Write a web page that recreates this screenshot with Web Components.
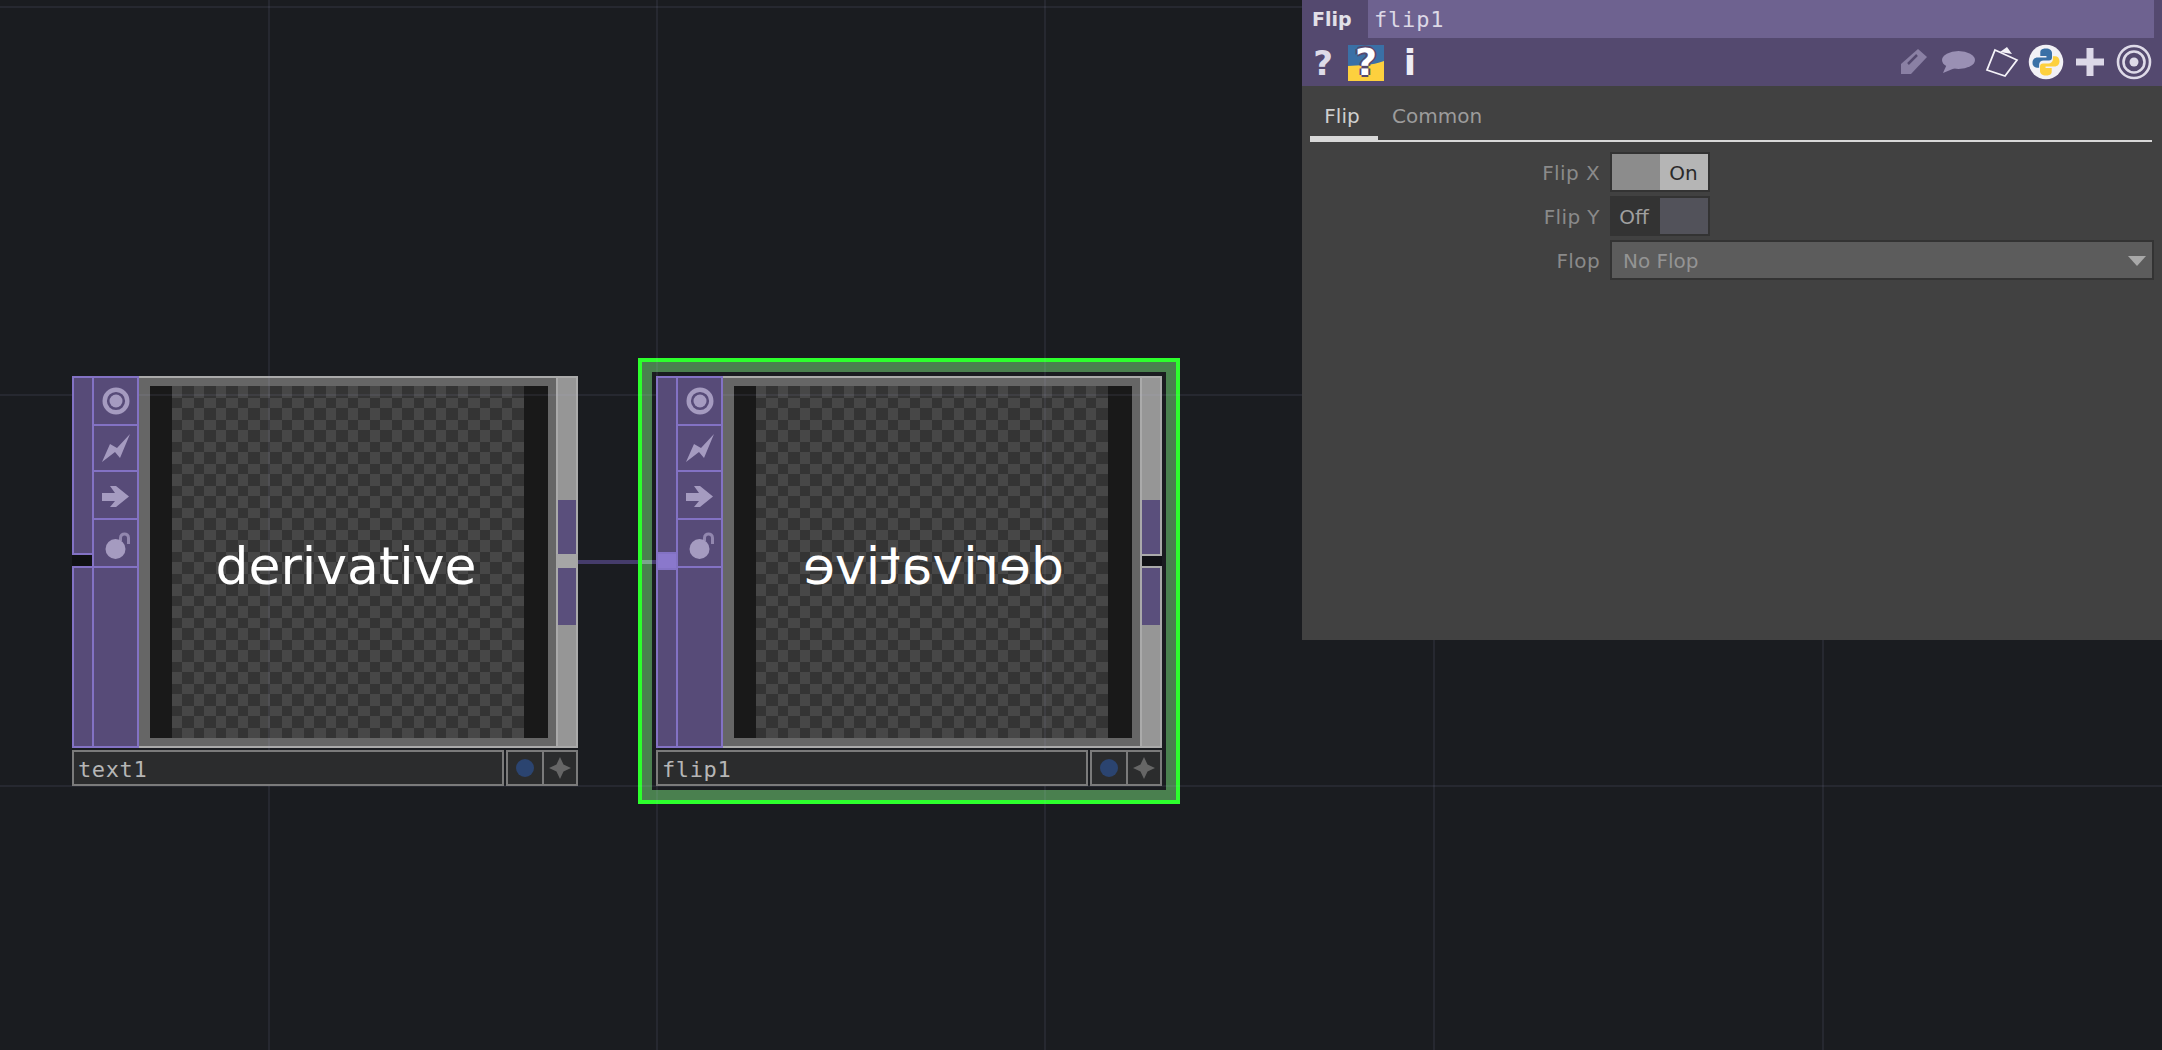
<!DOCTYPE html>
<html lang="en">
<head>
<meta charset="utf-8">
<title>Flip</title>
<style>
html,body{margin:0;padding:0;background:#1a1c20;overflow:hidden}
body{font-family:"DejaVu Sans",sans-serif}
</style>
</head>
<body>
<td-network>
  <td-op name="text1" output style="left:72px;top:376px">derivative</td-op>
  <td-wire style="left:578px;top:560px"></td-wire>
  <td-op name="flip1" input selected flip style="left:656px;top:376px">derivative</td-op>
  <td-panel optype="Flip" opname="flip1" slot="panel">
    <td-param label="Flip X"><td-toggle on></td-toggle></td-param>
    <td-param label="Flip Y"><td-toggle></td-toggle></td-param>
    <td-param label="Flop"><td-menu value="No Flop"></td-menu></td-param>
  </td-panel>
</td-network>
<script>
const ICONS = {
  viewer:`<svg width="28" height="28" viewBox="0 0 28 28"><circle cx="14" cy="14" r="11.3" fill="none" stroke="currentColor" stroke-width="4.400"/><circle cx="14" cy="14" r="6.500" fill="currentColor"/></svg>`,
  bolt:`<svg width="28" height="28" viewBox="0 0 28 28"><path fill="currentColor" d="M28 0L18 24L13 18L0 28L8 10L15 14Z"/></svg>`,
  arrow:`<svg width="27" height="21" viewBox="0 0 27 21" style="margin-top:3px"><path fill="currentColor" d="M0 7H13L8 0H14L27 10.5L14 21H8L13 15H0Z"/></svg>`,
  lock:`<svg width="30" height="30" viewBox="0 0 30 30" style="margin-top:3px"><circle cx="14.500" cy="19" r="10" fill="currentColor"/><path d="M19.500 11V8C19.500 2.500 27.500 2.500 27.500 8V14" fill="none" stroke="currentColor" stroke-opacity=".75" stroke-width="3"/></svg>`,
  dot:`<svg width="22" height="22" viewBox="0 0 22 22"><circle cx="11" cy="11" r="9" fill="#2b4470"/></svg>`,
  star:`<svg width="24" height="24" viewBox="0 0 24 24"><path fill="#666" d="M12 1L15.500 8.500L23 12L15.500 15.500L12 23L8.500 15.500L1 12L8.500 8.500Z"/></svg>`,
  pyhelp:`<svg width="36" height="36" viewBox="0 0 36 36"><rect width="36" height="36" fill="#3a70a6"/><path fill="#fdd03e" d="M0 21C10 20 24 21 36 16V36H0Z"/></svg>`,
  pencil:`<svg width="26" height="26" viewBox="0 0 26 26"><path fill="#8a80a4" d="M17 0L26 8L10 25H0V15Z"/><path d="M7 15L16 6" stroke="#54496f" stroke-width="2.5"/></svg>`,
  bubble:`<svg width="34" height="24" viewBox="0 0 34 24"><ellipse cx="17.500" cy="10" rx="16.500" ry="9" fill="#9a90b4"/><path fill="#9a90b4" d="M6 14L2 23L14 18Z"/></svg>`,
  note:`<svg width="34" height="34" viewBox="0 0 34 34"><path fill="none" stroke="#f4f2f8" stroke-width="1.800" d="M10 5L32 15L20 31L2 25Z"/><path fill="#f4f2f8" d="M22 2L27 9L15 7Z"/></svg>`,
  python:`<svg width="36" height="36" viewBox="0 0 24 24"><circle cx="12" cy="12" r="11.500" fill="#f2f1f6"/><path fill="#3a70a6" d="M12 3C8.500 3 8.200 4.500 8.200 6V8H12.300V9H6.400C4.300 9 3 10.500 3 12.500C3 14.500 4.200 15.800 6 15.800H7.400V13.800C7.400 12 8.800 11 10.400 11H14C15.300 11 16 10.200 16 9V6C16 4.300 14.500 3 12 3Z"/><path fill="#fdd03e" d="M12 21C15.500 21 15.800 19.500 15.800 18V16H11.700V15H17.600C19.700 15 21 13.500 21 11.500C21 9.500 19.800 8.200 18 8.200H16.600V10.200C16.600 12 15.200 13 13.600 13H10C8.700 13 8 13.800 8 15V18C8 19.700 9.500 21 12 21Z"/></svg>`,
  plus:`<svg width="28" height="28" viewBox="0 0 28 28"><path fill="#dcd8e8" d="M10.500 0H17.500V10.500H28V17.500H17.500V28H10.500V17.500H0V10.500H10.500Z"/></svg>`,
  target:`<svg width="36" height="36" viewBox="0 0 36 36"><g fill="none" stroke="#dedae8" stroke-width="2.600"><circle cx="18" cy="18" r="16"/><circle cx="18" cy="18" r="10.500"/></g><circle cx="18" cy="18" r="4.500" fill="#dedae8"/></svg>`
};

class TdIcon extends HTMLElement {
  constructor(){
    super();
    this.attachShadow({mode:'open'});
  }
  connectedCallback(){
    this.shadowRoot.innerHTML = `<style>:host{display:flex;align-items:center;justify-content:center}svg{display:block}</style>${ICONS[this.getAttribute('name')]||''}`;
  }
}
customElements.define('td-icon', TdIcon);

class TdNetwork extends HTMLElement {
  constructor(){
    super();
    const r = this.attachShadow({mode:'open'});
    const xs = [268,656,1044,1433,1822];
    const ys = [6,394,785];
    const lines = xs.map(x=>`<rect x="${x}" y="0" width="2" height="1050"/>`).join('')
      + ys.map(y=>`<rect x="0" y="${y}" width="2162" height="2"/>`).join('');
    r.innerHTML = `<style>
      :host{display:block;position:relative;width:2162px;height:1050px;background:#1a1c20;overflow:hidden}
      svg{position:absolute;left:0;top:0;z-index:2;fill:rgba(170,170,215,.085);pointer-events:none}
      ::slotted([slot=panel]){position:absolute;left:1302px;top:0;z-index:5}
    </style>
    <svg width="2162" height="1050">${lines}</svg>
    <slot></slot><slot name="panel"></slot>`;
  }
}
customElements.define('td-network', TdNetwork);

class TdWire extends HTMLElement {
  constructor(){
    super();
    this.attachShadow({mode:'open'}).innerHTML = `<style>
      :host{position:absolute;display:block;width:78px;height:4px;z-index:1;
        background:linear-gradient(90deg,#453c6b 0 60px,#2dff2d 60px 64px,#7ba58d 64px 74px,#453c6b 74px)}
    </style>`;
  }
}
customElements.define('td-wire', TdWire);

class TdOp extends HTMLElement {
  constructor(){
    super();
    this.attachShadow({mode:'open'});
  }
  connectedCallback(){
    const name = this.getAttribute('name');
    const conIn = this.hasAttribute('input');
    const conOut = this.hasAttribute('output');
    this.shadowRoot.innerHTML = `<style>
      :host{position:absolute;display:block;width:506px;height:410px;color:#a59bc0;font-family:"DejaVu Sans",sans-serif}
      .sel{display:none;position:absolute;left:-18px;top:-18px;right:-18px;bottom:-18px;border:4px solid #2dff2d;box-shadow:inset 0 0 0 10px rgba(122,228,125,.5);z-index:0}
      :host([selected]) .sel{display:block}
      .wrap{position:relative;display:flex;flex-direction:column;gap:2px;height:100%}
      .body{display:flex;height:372px}
      .in{width:20px;display:flex;flex-direction:column;position:relative;z-index:3}
      .in .seg{background:#574b78;border:2px solid #8372c4;border-right:0}
      .in .a{height:175px}
      .in .b{flex:1}
      .in .gap{height:11px;background:#101114}
      .in.on .a{height:174px}
      .in.on .gap{height:14px;background:#8a78cc;border-left:2px solid #8372c4;margin-right:-1px}
      .btns{width:47px;box-sizing:border-box;background:#574b78;border:2px solid #8372c4;display:flex;flex-direction:column;position:relative;z-index:3}
      .btns td-icon{box-sizing:border-box;border-bottom:2px solid #8372c4}
      .view{width:417px;box-sizing:border-box;background:#666;border:solid #aaa;border-width:2px 0;padding:8px 8px 8px 11px;position:relative;z-index:1}
      .img{position:relative;z-index:3;height:352px;display:flex;background:#191919;padding:0 24px 0 22px;box-sizing:border-box}
      .check{flex:1;position:relative;display:flex;align-items:center;justify-content:center;color:#fff;font-size:52px;line-height:60px;padding-top:8px;box-sizing:border-box;white-space:nowrap;overflow:hidden}
      .check svg{position:absolute;left:0;top:0}
      .check span{position:relative;margin-left:-4px}
      :host([flip]) .check span{transform:scaleX(-1);margin-left:4px}
      .out{width:22px;box-sizing:border-box;border:2px solid #aaa;display:flex;flex-direction:column;position:relative;z-index:1}
      .out .g{flex:1;background:#969696}
      .out .p{background:#5a4f7c}
      .out .p1{height:54px}
      .out .p2{height:57px}
      .out .c{height:14px;background:#a6a6a6;margin:0 -2px}
      .out .c.off{height:10px;background:#111216;border:solid #aaa;border-width:2px 0;margin:0 -2px 0 0}
      .lab{display:flex;height:36px;position:relative;z-index:3}
      .field{width:432px;box-sizing:border-box;border:2px solid #7b7b7b;background:#2b2c2d;font:22px/36px "DejaVu Sans Mono",monospace;letter-spacing:.6px;padding-left:4px;margin-right:2px;color:#b6b6b6;overflow:hidden}
      .mini{width:38px;box-sizing:border-box;border:2px solid #7b7b7b;background:#2b2c2d}
      .mini + .mini{margin-left:-2px;width:36px}
    </style>
    <div class="sel"></div>
    <div class="wrap">
      <div class="body">
        <div class="in ${conIn?'on':''}"><div class="seg a"></div><div class="gap"></div><div class="seg b"></div></div>
        <div class="btns">
          <td-icon name="viewer" style="height:48px"></td-icon>
          <td-icon name="bolt" style="height:46px"></td-icon>
          <td-icon name="arrow" style="height:48px"></td-icon>
          <td-icon name="lock" style="height:48px"></td-icon>
        </div>
        <div class="view"><div class="img"><div class="check">
          <svg width="352" height="352"><defs><pattern id="cells" width="22" height="22" patternUnits="userSpaceOnUse"><rect width="22" height="22" fill="#343434"/><rect width="10" height="12" fill="#474747"/><rect x="10" y="12" width="12" height="10" fill="#474747"/></pattern></defs><rect width="352" height="352" fill="url(#cells)"/></svg>
          <span><slot></slot></span></div></div></div>
        <div class="out"><div class="g"></div><div class="p p1"></div><div class="c ${conOut?'':'off'}"></div><div class="p p2"></div><div class="g"></div></div>
      </div>
      <div class="lab">
        <div class="field">${name}</div>
        <td-icon class="mini" name="dot"></td-icon>
        <td-icon class="mini" name="star"></td-icon>
      </div>
    </div>`;
  }
}
customElements.define('td-op', TdOp);

class TdPanel extends HTMLElement {
  constructor(){
    super();
    this.attachShadow({mode:'open'});
  }
  connectedCallback(){
    this.shadowRoot.innerHTML = `<style>
      :host{display:flex;flex-direction:column;width:860px;height:640px;background:#414141;font-family:"DejaVu Sans",sans-serif;font-size:20px}
      .title{display:flex;height:38px;background:#54496f;padding-right:8px}
      .type{width:66px;box-sizing:border-box;padding-left:10px;font-weight:700;font-size:19px;line-height:38px;color:#e2e0e8}
      .name{flex:1;background:#6e6290;color:#dcd8e6;font:22px/40px "DejaVu Sans Mono",monospace;letter-spacing:.8px;padding-left:6px;overflow:hidden}
      .tools{display:flex;height:48px;background:#54496f;justify-content:space-between;padding-right:6px;color:#dedbe8}
      .tools>div{display:flex}
      .cell{width:44px;display:flex;align-items:center;justify-content:center;position:relative;font-weight:700;font-size:34px;line-height:48px;padding-top:2px;box-sizing:border-box}
      td-icon.cell{padding-top:0}
      .cell.first{width:42px}
      .cell.i{font-size:36px;color:#eeecf4}
      .pyq{position:absolute;left:0;right:0;top:0;bottom:0;display:flex;align-items:center;justify-content:center;color:#fff;font-weight:700;font-size:38px;text-shadow:-2px 0 #54496f,2px 0 #54496f,0 -2px #54496f,0 2px #54496f}
      .tabs{display:flex;margin:0 10px 0 8px;height:56px;box-sizing:border-box;border-bottom:2px solid #d8d8d8;align-items:flex-end}
      .tab{height:56px;box-sizing:border-box;line-height:64px;color:#9c9c9c}
      .tab.on{width:68px;text-align:center;color:#cfcfcf;box-shadow:inset 0 -6px 0 #d8d8d8;margin-bottom:-2px;height:58px;padding-right:4px}
      .tab.off{padding-left:14px}
      .params{display:flex;flex-direction:column;gap:4px;padding:10px 8px 0 0}
    </style>
    <div class="title"><div class="type">${this.getAttribute('optype')}</div><div class="name">${this.getAttribute('opname')}</div></div>
    <div class="tools">
      <div>
        <div class="cell first">?</div>
        <div class="cell"><td-icon name="pyhelp"></td-icon><span class="pyq">?</span></div>
        <div class="cell i">i</div>
      </div>
      <div>
        <td-icon class="cell" name="pencil"></td-icon>
        <td-icon class="cell" name="bubble"></td-icon>
        <td-icon class="cell" name="note"></td-icon>
        <td-icon class="cell" name="python"></td-icon>
        <td-icon class="cell" name="plus"></td-icon>
        <td-icon class="cell" name="target"></td-icon>
      </div>
    </div>
    <div class="tabs"><div class="tab on">Flip</div><div class="tab off">Common</div></div>
    <div class="params"><slot></slot></div>`;
  }
}
customElements.define('td-panel', TdPanel);

class TdParam extends HTMLElement {
  constructor(){
    super();
    this.attachShadow({mode:'open'});
  }
  connectedCallback(){
    this.shadowRoot.innerHTML = `<style>
      :host{display:flex;height:40px;align-items:center}
      .l{width:298px;text-align:right;color:#8a8a8a;padding:2px 10px 0 0;letter-spacing:.4px}
      .c{flex:1;display:flex}
    </style><div class="l">${this.getAttribute('label')}</div><div class="c"><slot></slot></div>`;
  }
}
customElements.define('td-param', TdParam);

class TdToggle extends HTMLElement {
  constructor(){
    super();
    this.attachShadow({mode:'open'});
  }
  connectedCallback(){
    const on = this.hasAttribute('on');
    this.shadowRoot.innerHTML = `<style>
      :host{display:flex;width:100px;height:40px;box-sizing:border-box;border:2px solid #333}
      div{display:flex;align-items:center;justify-content:center;height:100%;width:48px;box-sizing:border-box;padding:2px 4px 0 0}
    </style>${on
      ?`<div style="background:#8c8c8c"></div><div style="background:#b5b5b5;color:#2a2a2a;padding-right:1px">On</div>`
      :`<div style="background:#333;color:#a0a0a0">Off</div><div style="background:#52525a"></div>`}`;
  }
}
customElements.define('td-toggle', TdToggle);

class TdMenu extends HTMLElement {
  constructor(){
    super();
    this.attachShadow({mode:'open'});
  }
  connectedCallback(){
    this.shadowRoot.innerHTML = `<style>
      :host{flex:1;display:flex;align-items:center;justify-content:space-between;height:40px;box-sizing:border-box;border:2px solid #333;background:#5c5c5c;color:#949494;padding:2px 6px 0 11px}
      svg{display:block}
    </style><span>${this.getAttribute('value')}</span><svg width="18" height="10" viewBox="0 0 18 10"><path fill="#a8a8a8" d="M0 0H18L9 10Z"/></svg>`;
  }
}
customElements.define('td-menu', TdMenu);
</script>
</body>
</html>
